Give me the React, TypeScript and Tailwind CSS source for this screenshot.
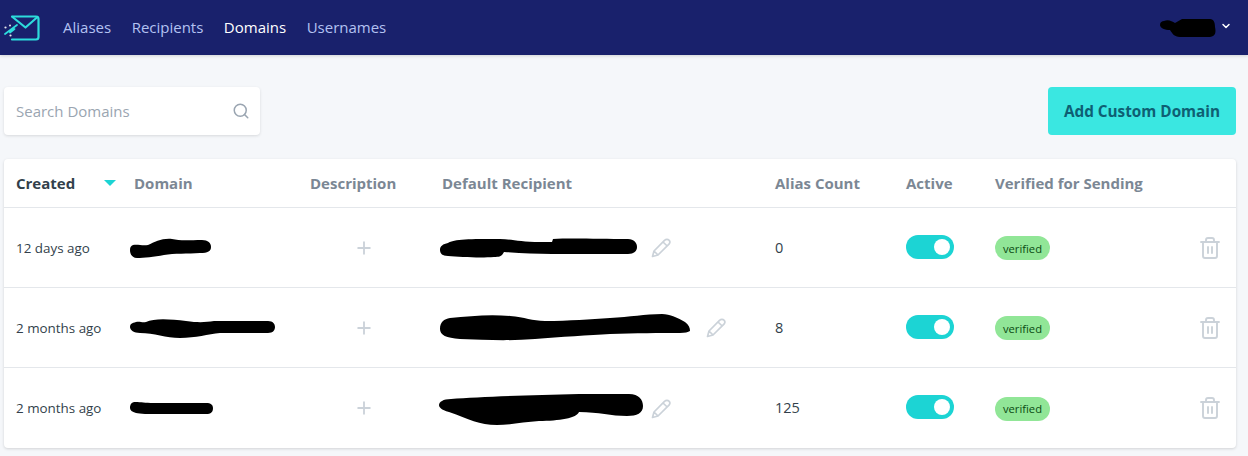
import { Plus, Search, Trash2, ChevronDown } from 'lucide-react'

const navLinks = [
  { label: 'Aliases', active: false },
  { label: 'Recipients', active: false },
  { label: 'Domains', active: true },
  { label: 'Usernames', active: false },
]

// the black marker strokes that hide addresses in the screenshot
const scribbles = {
  user: { w: 56, h: 18, d: 'M4 2 C8 0 12 2 15 4 L22 0 L50 0 C54 0 55 4 55 8 C56 13 56 17 50 18 L20 18 C14 18 12 14 10 11 C5 11 0 9 0 6 C0 3 2 2 4 2 Z' },
  domain1: { w: 81, h: 20, d: 'M3 7 C8 6 12 8 18 7 C25 4 32 0 42 1 C50 3 60 2 72 2 C78 2 81 5 81 9 C81 13 78 15 70 15 C58 16 44 15 34 17 C24 19 14 20 7 20 C2 20 0 16 0 12 C0 9 1 8 3 7 Z' },
  domain2: { w: 145, h: 20, d: 'M6 4 C10 3 12 5 16 4 C24 0 40 1 56 3 C70 5 76 4 84 3 L138 3 C143 3 145 6 145 9 C145 12 143 15 138 15 L90 15 C78 16 66 20 50 20 C36 20 24 15 10 15 C4 15 0 12 0 9 C0 6 2 5 6 4 Z' },
  domain3: { w: 83, h: 12, d: 'M5 0 C12 0 14 1 24 1 L76 1 C81 1 83 3 83 6 C83 10 81 12 76 12 L30 12 C18 12 10 12 6 11 C2 10 0 8 0 6 C0 2 2 0 5 0 Z' },
  recipient1: { w: 197, h: 20, d: 'M8 5 C14 1 30 1 60 1 C72 1 80 4 100 4 L112 4 L113 1 C130 0 160 1 188 1 C194 1 197 5 197 9 C197 13 194 16 188 16 L112 16 C96 16 80 15 64 14 C62 18 60 19 54 19 C40 20 20 19 8 18 C2 18 0 15 0 12 C0 8 3 6 8 5 Z' },
  recipient2: { w: 250, h: 27, d: 'M10 4 C30 2 50 0 70 2 C85 3 92 7 105 7 C130 7 150 5 170 4 C190 3 205 0 222 0 C230 0 238 4 245 8 C249 11 250 14 250 17 C248 18 245 19 240 19 C220 19 195 19 170 20 C150 21 120 23 95 25 C70 27 45 26 20 25 C6 24 0 21 0 15 C0 8 4 5 10 4 Z' },
  recipient3: { w: 204, h: 31, d: 'M12 5 C40 3 90 1 140 0 L190 0 C200 0 204 6 204 12 C204 19 198 22 188 22 C172 22 160 18 140 18 C138 24 120 27 100 27 C85 28 70 31 58 31 C40 31 30 25 10 18 C2 16 0 13 0 11 C0 8 4 5 12 5 Z' },
}

function Scribble({ name }: { name: keyof typeof scribbles }) {
  const s = scribbles[name]
  return (
    <svg width={s.w} height={s.h} viewBox={`0 0 ${s.w} ${s.h}`} className="block shrink-0">
      <path d={s.d} fill="#000" />
    </svg>
  )
}

function Logo() {
  return (
    <svg width="36" height="26" viewBox="0 0 36 26" fill="none" className="block">
      <path d="M8 1.5 H32 A2.5 2.5 0 0 1 34.5 4 V22 A2.5 2.5 0 0 1 32 24.5 H8" stroke="#2DDCDC" strokeWidth="2.2" strokeLinecap="round" />
      <path d="M8.5 2 L21.5 12.5 L33.5 2" stroke="#2DDCDC" strokeWidth="2.2" strokeLinecap="round" strokeLinejoin="round" />
      <path d="M1 19 L13 10 M6 17.5 L10.5 14" stroke="#2DDCDC" strokeWidth="1.8" strokeLinecap="round" />
      <circle cx="1.5" cy="12.5" r="1.1" fill="#E4E7EB" />
      <circle cx="6" cy="10.5" r="1" fill="#E4E7EB" />
      <circle cx="6.5" cy="20.5" r="1.1" fill="#E4E7EB" />
    </svg>
  )
}

function Pencil() {
  return (
    <svg width="20" height="20" viewBox="0 0 20 20" fill="none" className="block shrink-0">
      <path d="M1.5 18.5 L3 13 L13.5 2.3 C15 1 17 1 18 2.2 C19.2 3.4 19 5 18 6.2 L7 17 Z M3 13 L7 17 M12 4 L16.2 8" stroke="#CBD2D9" strokeWidth="1.7" strokeLinejoin="round" />
    </svg>
  )
}

function Toggle() {
  return (
    <div className="mb-[2px] flex h-6 w-12 items-center justify-end rounded-full bg-[#1CD4D4] px-[4px]">
      <div className="h-4 w-4 rounded-full bg-white" />
    </div>
  )
}

const rows = [
  { created: '12 days ago', domain: 'domain1', recipient: 'recipient1', pencil: 'ml-[14px]', shift: 'pl-[10px]', count: '0' },
  { created: '2 months ago', domain: 'domain2', recipient: 'recipient2', pencil: 'ml-[16px]', shift: 'pl-[10px]', count: '8' },
  { created: '2 months ago', domain: 'domain3', recipient: 'recipient3', pencil: 'ml-[8px]', shift: 'pl-[9px] pt-[2px]', count: '125' },
] as const

const gridCols = 'grid grid-cols-[118px_176px_132px_333px_131px_89px_1fr_60px] items-center'

export default function App() {
  return (
    <div className="h-[456px] w-[1248px] overflow-hidden bg-[#F5F7FA] font-['Open_Sans',sans-serif] text-[#323F4B]">
      <nav className="flex h-[55px] items-center bg-[#19216C] pl-1 pr-[16px] shadow-[0_1px_3px_rgba(0,0,0,0.15)]">
        <Logo />
        <div className="ml-[23px] flex gap-[20.5px] text-[15px]">
          {navLinks.map((link) => (
            <span key={link.label} className={link.active ? 'text-white' : 'text-[#B3C2F2]'}>
              {link.label}
            </span>
          ))}
        </div>
        <div className="ml-auto flex items-center">
          <Scribble name="user" />
          <ChevronDown className="mb-[4px] ml-[4px] h-[12px] w-[12px] text-white" strokeWidth={3} />
        </div>
      </nav>

      <div className="pl-1 pr-3">
        <div className="mt-[32px] flex items-center justify-between">
          <div className="flex h-[48px] w-[256px] items-center justify-between rounded bg-white pl-3 pr-[10px] shadow-[0_1px_3px_rgba(0,0,0,0.12)]">
            <span className="text-[15px] text-[#9AA5B1]">Search Domains</span>
            <Search className="h-[18px] w-[18px] text-[#9AA5B1]" strokeWidth={2} />
          </div>
          <button className="h-[48px] w-[188px] rounded bg-[#3AE7E1] pt-[1px] text-[15.3px] font-bold text-[#0E5F73]">
            Add Custom Domain
          </button>
        </div>

        <div className="mt-[24px] rounded-sm bg-white shadow-[0_1px_3px_rgba(0,0,0,0.15)]">
          <div className={`${gridCols} h-[49px] border-b border-[#E4E7EB] pt-[1px] text-[15px] font-bold text-[#7B8794]`}>
            <div className="flex items-center justify-between pl-3 pr-[6px] text-[#323F4B]">
              <span>Created</span>
              <span className="mb-[2px] h-0 w-0 border-x-[6px] border-t-[6px] border-x-transparent border-t-[#1CD4D4]" />
            </div>
            <div className="pl-3">Domain</div>
            <div className="pl-3">Description</div>
            <div className="pl-3">Default Recipient</div>
            <div className="pl-3">Alias Count</div>
            <div className="pl-3">Active</div>
            <div className="pl-3">Verified for Sending</div>
            <div />
          </div>
          {rows.map((row, i) => (
            <div
              key={row.domain}
              className={`${gridCols} h-[80px] ${i < rows.length - 1 ? 'border-b border-[#E4E7EB]' : ''}`}
            >
              <div className="pl-3 pt-[1px] text-[13.4px]">{row.created}</div>
              <div className="pl-2">
                <Scribble name={row.domain} />
              </div>
              <div className="flex justify-center">
                <Plus className="h-[20px] w-[20px] text-[#CBD2D9]" strokeWidth={2.2} />
              </div>
              <div className={`flex items-center ${row.shift}`}>
                <Scribble name={row.recipient} />
                <div className={row.pencil}>
                  <Pencil />
                </div>
              </div>
              <div className="pl-3 text-[14.5px]">{row.count}</div>
              <div className="pl-3">
                <Toggle />
              </div>
              <div className="pl-3">
                <span className="inline-flex h-6 items-center rounded-full bg-[#91E697] px-2 pt-[1px] text-[11.2px] text-[#0A4A12]">
                  verified
                </span>
              </div>
              <div className="flex justify-end pr-[14px]">
                <Trash2 className="h-[24px] w-[24px] text-[#CBD2D9]" strokeWidth={1.9} />
              </div>
            </div>
          ))}
        </div>
      </div>
    </div>
  )
}
